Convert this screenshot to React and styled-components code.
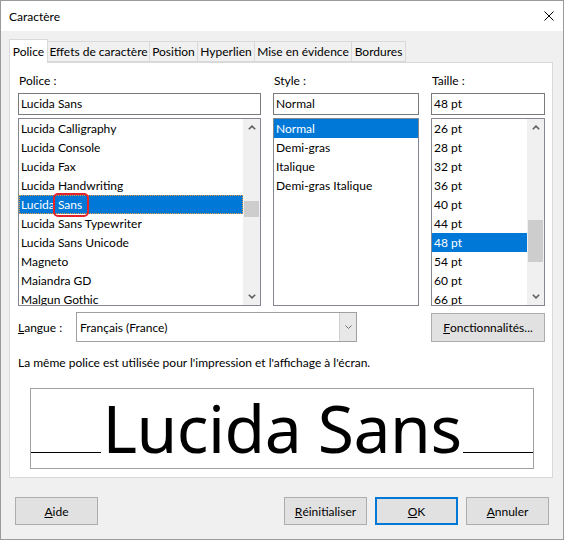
import React from "react";
import styled, { createGlobalStyle } from "styled-components";

const Global = createGlobalStyle`
  html, body { margin: 0; padding: 0; background: #ffffff; }
  body {
    font-family: Lato, "Liberation Sans", Arial, sans-serif;
    font-size: 12px;
    color: #000;
  }
  * { box-sizing: border-box; }
`;

const Window = styled.div`
  width: 564px;
  height: 540px;
  border: 1px solid #9a9a9a;
  background: #f0f0f0;
  display: flex;
  flex-direction: column;
`;

const TitleBar = styled.div`
  height: 30px;
  flex: none;
  background: #ffffff;
  display: flex;
  align-items: center;
  justify-content: space-between;
  padding: 0 9px 0 8px;
`;

const Title = styled.span`
  font-size: 12px;
`;

const CloseButton = styled.div`
  width: 10px;
  height: 10px;
  display: flex;
`;

const Body = styled.div`
  padding: 8px 10px 0 8px;
  display: flex;
  flex-direction: column;
`;

const TabStrip = styled.div`
  height: 23px;
  display: flex;
  align-items: flex-end;
  padding-left: 1px;
`;

const Tab = styled.div`
  position: relative;
  width: ${(p) => p.$w}px;
  height: ${(p) => (p.$active ? 24 : 21)}px;
  margin-left: -1px;
  margin-bottom: ${(p) => (p.$active ? -1 : 0)}px;
  z-index: ${(p) => (p.$active ? 2 : 1)};
  border: 1px solid #d9d9d9;
  border-bottom: ${(p) => (p.$active ? "none" : "1px solid #d9d9d9")};
  background: ${(p) => (p.$active ? "#ffffff" : "#f0f0f0")};
  display: flex;
  align-items: center;
  justify-content: center;
  padding-bottom: ${(p) => (p.$active ? 1 : 0)}px;
  white-space: nowrap;
`;

const Panel = styled.div`
  height: 416px;
  border: 1px solid #d9d9d9;
  background: #ffffff;
  padding: 8px 7px 0 8px;
  display: flex;
  flex-direction: column;
`;

const Columns = styled.div`
  display: grid;
  grid-template-columns: 243px 146px 114px;
  column-gap: 12px;
`;

const Column = styled.div`
  display: flex;
  flex-direction: column;
`;

const Label = styled.div`
  height: 18px;
  line-height: 19px;
  margin-bottom: 4px;
  padding-left: 1px;
`;

const TextField = styled.div`
  height: 22px;
  border: 1px solid #7a7a7a;
  background: #ffffff;
  line-height: 20px;
  padding-left: 2px;
  margin-bottom: 3px;
  white-space: nowrap;
`;

const ListBox = styled.div`
  position: relative;
  height: 188px;
  border: 1px solid #828790;
  background: #ffffff;
  display: flex;
`;

const Items = styled.div`
  flex: 1;
  min-width: 0;
  overflow: hidden;
`;

const Item = styled.div`
  height: 19px;
  line-height: 19px;
  padding-left: 2px;
  white-space: nowrap;
  background: ${(p) => (p.$sel ? "#0078d7" : "transparent")};
  color: ${(p) => (p.$sel ? "#ffffff" : "#000000")};
  outline: ${(p) => (p.$focus ? "1px dotted #e8a040" : "none")};
  outline-offset: -1px;
`;

const ScrollBar = styled.div`
  width: 17px;
  flex: none;
  background: #f0f0f0;
  display: flex;
  flex-direction: column;
`;

const ScrollButton = styled.div`
  height: 17px;
  flex: none;
  display: flex;
  align-items: center;
  justify-content: center;
`;

const Track = styled.div`
  flex: 1;
  overflow: hidden;
`;

const Thumb = styled.div`
  margin: ${(p) => p.$top}px 1px 0 1px;
  height: ${(p) => p.$h}px;
  background: #cdcdcd;
`;

const Annotation = styled.div`
  position: absolute;
  left: 34px;
  top: 74px;
  width: 36px;
  height: 24px;
  border: 2px solid #e3242b;
  border-radius: 5px;
  pointer-events: none;
`;

const LangRow = styled.div`
  margin-top: 6px;
  height: 30px;
  display: flex;
  align-items: center;
  justify-content: space-between;
`;

const LangGroup = styled.div`
  display: flex;
  align-items: center;
`;

const LangLabel = styled.div`
  width: 58px;
`;

const Combo = styled.div`
  width: 281px;
  height: 30px;
  border: 1px solid #a0a0a0;
  background: #ffffff;
  display: flex;
  align-items: stretch;
`;

const ComboText = styled.div`
  flex: 1;
  padding-left: 3px;
  display: flex;
  align-items: center;
`;

const ComboButton = styled.div`
  width: 17px;
  border-left: 1px solid #cfcfcf;
  background: #e8e8e8;
  display: flex;
  align-items: center;
  justify-content: center;
`;

const Button = styled.div`
  width: ${(p) => p.$w || 83}px;
  height: ${(p) => p.$h || 28}px;
  background: #e1e1e1;
  border: ${(p) => (p.$default ? "2px solid #0078d7" : "1px solid #adadad")};
  display: flex;
  align-items: center;
  justify-content: center;
  white-space: nowrap;
`;

const Info = styled.div`
  margin-top: 12px;
  height: 18px;
  line-height: 18px;
`;

const Preview = styled.div`
  margin: 16px 11px 0 12px;
  height: 81px;
  border: 1px solid #a0a0a0;
  display: flex;
  align-items: baseline;
  padding-top: 5px;
`;

const BaseLine = styled.div`
  flex: 1;
  height: 1px;
  background: #000000;
`;

const PreviewText = styled.div`
  font-family: "Noto Sans", "Open Sans", sans-serif;
  font-size: 66px;
  letter-spacing: -0.5px;
  line-height: 1;
  white-space: nowrap;
  padding: 0 1px;
`;

const Footer = styled.div`
  margin-top: 19px;
  padding: 0 14px;
  display: flex;
  justify-content: space-between;
`;

const FooterGroup = styled.div`
  display: flex;
  gap: 8px;
`;

const Chevron = ({ up, small }) => (
  <svg width={small ? 7 : 8} height={small ? 4 : 5} viewBox={small ? "0 0 7 4" : "0 0 8 5"}>
    {small ? (
      <polyline points="0.5,0.5 3.5,3.5 6.5,0.5" fill="none" stroke="#707070" strokeWidth="1" />
    ) : (
      <polyline
        points={up ? "0.8,4.3 4,1.1 7.2,4.3" : "0.8,0.7 4,3.9 7.2,0.7"}
        fill="none"
        stroke="#606060"
        strokeWidth="1.6"
      />
    )}
  </svg>
);

const ListScroll = ({ top, h }) => (
  <ScrollBar>
    <ScrollButton>
      <Chevron up />
    </ScrollButton>
    <Track>
      <Thumb $top={top} $h={h} />
    </Track>
    <ScrollButton>
      <Chevron />
    </ScrollButton>
  </ScrollBar>
);

const fonts = [
  "Lucida Calligraphy",
  "Lucida Console",
  "Lucida Fax",
  "Lucida Handwriting",
  "Lucida Sans",
  "Lucida Sans Typewriter",
  "Lucida Sans Unicode",
  "Magneto",
  "Maiandra GD",
  "Malgun Gothic",
];
const styles = ["Normal", "Demi-gras", "Italique", "Demi-gras Italique"];
const sizes = ["26 pt", "28 pt", "32 pt", "36 pt", "40 pt", "44 pt", "48 pt", "54 pt", "60 pt", "66 pt"];

const tabs = [
  { label: "Police", w: 39, active: true },
  { label: "Effets de caractère", w: 103 },
  { label: "Position", w: 49 },
  { label: "Hyperlien", w: 58 },
  { label: "Mise en évidence", w: 98 },
  { label: "Bordures", w: 55 },
];

export default function App() {
  return (
    <>
      <Global />
      <Window>
        <TitleBar>
          <Title>Caractère</Title>
          <CloseButton>
            <svg width="10" height="10" viewBox="0 0 10 10">
              <path d="M0.5 0.5 L9.5 9.5 M9.5 0.5 L0.5 9.5" stroke="#000" strokeWidth="1" />
            </svg>
          </CloseButton>
        </TitleBar>
        <Body>
          <TabStrip>
            {tabs.map((t) => (
              <Tab key={t.label} $w={t.w} $active={t.active}>
                {t.label}
              </Tab>
            ))}
          </TabStrip>
          <Panel>
            <Columns>
              <Column>
                <Label>Police :</Label>
                <TextField>Lucida Sans</TextField>
                <ListBox>
                  <Items>
                    {fonts.map((f) => (
                      <Item key={f} $sel={f === "Lucida Sans"} $focus={f === "Lucida Sans"}>
                        {f}
                      </Item>
                    ))}
                  </Items>
                  <ListScroll top={65} h={16} />
                  <Annotation />
                </ListBox>
              </Column>
              <Column>
                <Label>Style :</Label>
                <TextField>Normal</TextField>
                <ListBox>
                  <Items>
                    {styles.map((s) => (
                      <Item key={s} $sel={s === "Normal"}>
                        {s}
                      </Item>
                    ))}
                  </Items>
                </ListBox>
              </Column>
              <Column>
                <Label>Taille :</Label>
                <TextField>48 pt</TextField>
                <ListBox>
                  <Items>
                    {sizes.map((s) => (
                      <Item key={s} $sel={s === "48 pt"}>
                        {s}
                      </Item>
                    ))}
                  </Items>
                  <ListScroll top={84} h={42} />
                </ListBox>
              </Column>
            </Columns>
            <LangRow>
              <LangGroup>
                <LangLabel>
                  <u>L</u>angue :
                </LangLabel>
                <Combo>
                  <ComboText>Français (France)</ComboText>
                  <ComboButton>
                    <Chevron small />
                  </ComboButton>
                </Combo>
              </LangGroup>
              <Button $w={114} $h={29}>
                <u>F</u>onctionnalités...
              </Button>
            </LangRow>
            <Info>La même police est utilisée pour l'impression et l'affichage à l'écran.</Info>
            <Preview>
              <BaseLine />
              <PreviewText>Lucida Sans</PreviewText>
              <BaseLine />
            </Preview>
          </Panel>
        </Body>
        <Footer>
          <Button>
            <u>A</u>ide
          </Button>
          <FooterGroup>
            <Button>
              <u>R</u>éinitialiser
            </Button>
            <Button $default>
              <u>O</u>K
            </Button>
            <Button>
              <u>A</u>nnuler
            </Button>
          </FooterGroup>
        </Footer>
      </Window>
    </>
  );
}
